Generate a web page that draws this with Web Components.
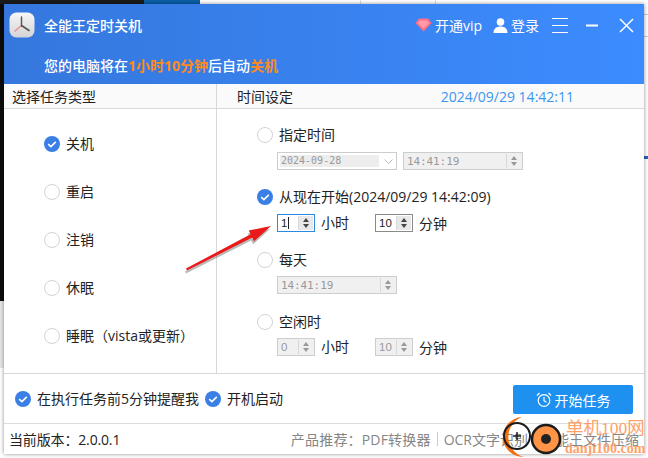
<!DOCTYPE html>
<html lang="zh">
<head>
<meta charset="utf-8">
<title>全能王定时关机</title>
<style>
	html, body {
		margin: 0;
		padding: 0;
		background: #fff;
		font: 14px "Open Sans", "Noto Sans CJK SC", sans-serif;
		color: #222;
	}
</style>
</head>
<body>
<shot-desktop>
	<app-window>
		<title-bar slot="head"></title-bar>
		<task-panel slot="body"></task-panel>
		<option-bar slot="options"></option-bar>
		<status-bar slot="status"></status-bar>
	</app-window>
	<red-arrow></red-arrow>
	<site-mark></site-mark>
</shot-desktop>

<script>
'use strict';

function define (name, html) {
	window.customElements.define(name, class extends HTMLElement {
		constructor () {
			super();
			let shadowRoot = this.attachShadow({mode: 'open'});
			shadowRoot.innerHTML = typeof html === 'function' ? html(this) : html;
		}
	});
}

define('shot-desktop', `
	<style>
		:host {
			display: block;
			position: relative;
			width: 648px;
			height: 458px;
			box-sizing: border-box;
			padding: 4px;
			overflow: hidden;
			background:
				linear-gradient(to right, #1b1b1b 0 144px, #0a5fa8 144px 200px, #fff 200px 360px, #ddd 360px 361px, #fff 361px 435px, #ddd 435px 436px, #fff 436px) top left / 100% 4px no-repeat,
				linear-gradient(#0c0c0c 0 301px, #e6e6e6 301px 368px, #fff 368px) top left / 4px 100% no-repeat,
				linear-gradient(#fff 0 14px, #ccc 14px 15px, #fff 15px 36px, #ccc 36px 37px, #fff 37px 156px, #2a5fc0 156px 159px, #fff 159px) top right / 4px 100% no-repeat,
				#fff;
		}
	</style>
	<slot></slot>
`);

define('app-window', `
	<style>
		:host {
			display: flex;
			flex-direction: column;
			width: 640px;
			height: 450px;
			background: #fff;
			box-shadow: 0 0 4px rgba(0, 0, 0, .45);
		}
	</style>
	<slot name="head"></slot>
	<slot name="body"></slot>
	<slot name="options"></slot>
	<slot name="status"></slot>
`);

define('title-bar', `
	<style>
		:host {
			display: flex;
			flex-direction: column;
			height: 80px;
			flex: none;
			box-sizing: border-box;
			padding: 8px 10px 0 5px;
			color: #fff;
			background: linear-gradient(to right, #3577dd, #3c8cff);
			font-size: 14px;
		}
		.top { display: flex; align-items: center; height: 26px; }
		.logo { width: 26px; height: 26px; flex: none; margin-right: 9px; }
		.name { font-weight: 500; flex: 1; }
		.tool { display: flex; align-items: center; gap: 3px; white-space: nowrap; }
		.vip { margin-right: 11px; }
		.menu { margin-left: 13px; }
		.min { margin-left: 18px; }
		.close { margin-left: 21px; }
		svg { display: block; flex: none; }
		.msg { margin: 18px 0 0 35px; font-weight: 500; line-height: 20px; }
		.msg b { color: #ff8a1c; font-weight: 700; }
	</style>
	<div class="top">
		<svg class="logo" viewBox="0 0 26 26">
			<defs><linearGradient id="lg" x1="0" y1="0" x2="0" y2="1"><stop offset="0" stop-color="#f7f7f7"/><stop offset="1" stop-color="#d4d4d6"/></linearGradient></defs>
			<rect x="0.5" y="0.5" width="25" height="25" rx="7" fill="url(#lg)"/>
			<path d="M12.5 13.5V5" stroke="#555" stroke-width="1.4" stroke-linecap="round"/>
			<path d="M12.5 13.5L6 19" stroke="#e88f8f" stroke-width="1.4" stroke-linecap="round"/>
			<path d="M12.5 13.5L20 18.5" stroke="#555" stroke-width="1.6" stroke-linecap="round"/>
		</svg>
		<span class="name">全能王定时关机</span>
		<span class="tool vip">
			<svg width="17" height="14" viewBox="0 0 17 14"><path d="M4 .5h9L16.5 5 8.5 13.5.5 5z" fill="#ff6f86"/><path d="M5 2.5h7L14 5l-5.500 5.500L3 5z" fill="#ff9aa8"/></svg>
			<span>开通vip</span>
		</span>
		<span class="tool">
			<svg width="15" height="15" viewBox="0 0 15 15" fill="#fff"><circle cx="7.500" cy="4" r="3.800"/><path d="M.5 15c0-4.500 3-6.500 7-6.500s7 2 7 6.500z"/></svg>
			<span>登录</span>
		</span>
		<svg class="menu" width="16" height="15" viewBox="0 0 16 15" stroke="#fff" stroke-width="1"><path d="M0 .5h16M0 7.500h16M0 14.500h16"/></svg>
		<svg class="min" width="12" height="3" viewBox="0 0 12 3"><rect width="12" height="2" y=".5" fill="#fff"/></svg>
		<svg class="close" width="15" height="15" viewBox="0 0 15 15" stroke="#fff" stroke-width="1.500"><path d="M1 1l13 13M14 1L1 14"/></svg>
	</div>
	<div class="msg">您的电脑将在<b>1小时10分钟</b>后自动<b>关机</b></div>
`);

define('check-item', (el) => `
	<style>
		:host {
			display: flex;
			align-items: center;
			gap: 6px;
			white-space: nowrap;
			color: #222;
			font-size: 14px;
			line-height: 18px;
		}
		svg { display: block; flex: none; }
	</style>
	<svg width="16" height="16" viewBox="0 0 16 16">
		${el.hasAttribute('checked')
			? '<circle cx="8" cy="8" r="8" fill="#3a7fe6"/><path d="M4.200 8.200l2.700 2.400 4.900-4.700" fill="none" stroke="#fff" stroke-width="1.600"/>'
			: '<circle cx="8" cy="8" r="7.500" fill="#fff" stroke="#d2d2d2"/>'}
	</svg>
	<span><slot></slot></span>
`);

define('spin-box', (el) => {
	let off = el.hasAttribute('disabled');
	let caret = el.hasAttribute('caret') ? '<i class="caret"></i>' : '';
	return `
	<style>
		:host {
			display: inline-flex;
			align-items: center;
			box-sizing: border-box;
			height: 18px;
			width: ${el.getAttribute('width') || 38}px;
			flex: none;
			padding: 0 1px 0 3px;
			border: 1px solid ${el.hasAttribute('caret') ? '#2a8ae0' : off ? '#cdcdcd' : '#8a8a8a'};
			background: ${off ? '#f0f0f0' : '#fff'};
			color: ${off ? '#999' : '#222'};
			font: 11.500px "Liberation Sans", sans-serif;
		}
		:host([mono]) {
			font: 11px "DejaVu Sans Mono", monospace;
			letter-spacing: -.1px;
		}
		.val { flex: 1; display: flex; align-items: center; white-space: nowrap; }
		.caret { display: block; width: 1px; height: 12px; margin-left: 1px; background: #222; }
		.btn {
			display: flex;
			flex-direction: column;
			align-items: center;
			justify-content: center;
			gap: 2px;
			width: 14px;
			height: 14px;
			flex: none;
			background: ${off ? '#f0f0f0' : '#e8e8e8'};
			border-left: 1px solid #d8d8d8;
		}
		.btn::before, .btn::after {
			content: '';
			border: 3px solid transparent;
			border-top-width: 0;
			border-bottom: 4px solid ${off ? '#999' : '#444'};
		}
		.btn::after { transform: scaleY(-1); }
	</style>
	<span class="val"><slot></slot>${caret}</span>
	<span class="btn"></span>
`;
});

define('date-box', `
	<style>
		:host {
			display: inline-flex;
			align-items: center;
			box-sizing: border-box;
			width: 120px;
			height: 18px;
			flex: none;
			padding: 2px;
			border: 1px solid #cdcdcd;
			background: #fff;
			color: #999;
			font: 10px "DejaVu Sans Mono", monospace;
		}
		.val { width: 99px; height: 12px; line-height: 12px; padding-left: 1px; box-sizing: border-box; background: #ededed; white-space: nowrap; }
		svg { margin-left: 5px; }
	</style>
	<span class="val"><slot></slot></span>
	<svg width="9" height="5" viewBox="0 0 9 5" fill="none" stroke="#bbb"><path d="M.5.5l4 4 4-4"/></svg>
`);

define('task-panel', `
	<style>
		:host {
			display: grid;
			grid-template-columns: 213px 1fr;
			grid-template-rows: 25px 1fr;
			height: 290px;
			flex: none;
			font-size: 14px;
			color: #222;
			border-bottom: 1px solid #d8d8d8;
			box-sizing: border-box;
		}
		.hd {
			display: flex;
			align-items: center;
			justify-content: space-between;
			box-sizing: border-box;
			padding-top: 2px;
			background: #fafafa;
			border-bottom: 1px solid #d8d8d8;
			line-height: 18px;
		}
		.hd.l { padding-left: 8px; border-right: 1px solid #d8d8d8; }
		.hd.r { padding-left: 20px; padding-right: 70px; }
		.now { color: #3a96ee; }
		.types {
			display: grid;
			grid-auto-rows: 48px;
			padding: 11px 0 0 40px;
			border-right: 1px solid #d8d8d8;
			box-sizing: border-box;
			align-items: center;
		}
		.plans {
			display: flex;
			flex-direction: column;
			padding: 17px 0 0 40px;
		}
		.sub {
			display: flex;
			align-items: center;
			height: 18px;
			margin: 8px 0 0 20px;
			gap: 6px;
		}
		.sub.near { margin-top: 7px; }
		.unit { width: 48px; line-height: 18px; }
		.plans .p2 { margin-top: 18px; }
		.plans .p3 { margin-top: 19px; }
		.plans .p4 { margin-top: 19px; }
	</style>
	<div class="hd l">选择任务类型</div>
	<div class="hd r"><span>时间设定</span><span class="now">2024/09/29 14:42:11</span></div>
	<div class="types">
		<check-item checked>关机</check-item>
		<check-item>重启</check-item>
		<check-item>注销</check-item>
		<check-item>休眠</check-item>
		<check-item>睡眠（vista或更新）</check-item>
	</div>
	<div class="plans">
		<check-item>指定时间</check-item>
		<div class="sub"><date-box>2024-09-28</date-box><spin-box width="120" mono disabled>14:41:19</spin-box></div>
		<check-item class="p2" checked>从现在开始(2024/09/29 14:42:09)</check-item>
		<div class="sub"><spin-box caret>1</spin-box><span class="unit">小时</span><spin-box>10</spin-box><span>分钟</span></div>
		<check-item class="p3">每天</check-item>
		<div class="sub near"><spin-box width="120" mono disabled>14:41:19</spin-box></div>
		<check-item class="p4">空闲时</check-item>
		<div class="sub near"><spin-box disabled>0</spin-box><span class="unit">小时</span><spin-box disabled>10</spin-box><span>分钟</span></div>
	</div>
`);

define('option-bar', `
	<style>
		:host {
			display: flex;
			align-items: center;
			gap: 6px;
			height: 49px;
			flex: none;
			padding: 0 11px;
			border-bottom: 1px solid #dcdcdc;
			box-sizing: content-box;
		}
		button {
			display: flex;
			align-items: center;
			justify-content: center;
			gap: 3px;
			width: 120px;
			height: 29px;
			margin: 2px 0 0 auto;
			padding: 0;
			border: 0;
			border-radius: 2px;
			background: #1e90f0;
			color: #fff;
			font: inherit;
			font-size: 14px;
		}
		svg { display: block; }
	</style>
	<check-item checked>在执行任务前5分钟提醒我</check-item>
	<check-item checked>开机启动</check-item>
	<button>
		<svg width="16" height="16" viewBox="0 0 16 16" fill="none" stroke="#fff" stroke-width="1.200">
			<circle cx="8" cy="8.500" r="5.800"/>
			<path d="M8 5v3.700l2.500 1.500M1 3.500L3.500 1M15 3.500L12.500 1"/>
		</svg>
		<span>开始任务</span>
	</button>
`);

define('status-bar', `
	<style>
		:host {
			display: flex;
			align-items: center;
			flex: 1;
			padding: 0 5px;
			font-size: 14px;
			color: #222;
			white-space: nowrap;
		}
		.ver { flex: 1; letter-spacing: -.15px; }
		.links { display: flex; align-items: center; color: #868686; }
		.first { letter-spacing: .18px; }
		.sep { width: 1px; height: 14px; margin: 0 6px; background: #ccc; }
	</style>
	<span class="ver">当前版本：2.0.0.1</span>
	<span class="links">
		<span class="first">产品推荐：PDF转换器</span><i class="sep"></i><span>OCR文字识别</span><i class="sep"></i><span>全能王文件压缩</span>
	</span>
`);

/* annotation drawn on top of the screenshot */
define('red-arrow', `
	<style>
		:host { position: absolute; left: 180px; top: 222px; width: 100px; height: 54px; }
		svg { display: block; overflow: visible; }
	</style>
	<svg width="100" height="54" viewBox="0 0 100 54">
		<path d="M6 46.500L70.600 12.300 68.700 8.500 91 4 74.100 19.300 72.200 15.500 7 48.500z" fill="#666" opacity=".45" transform="translate(-1 3)"/>
		<path d="M6 46.500L70.600 12.300 68.700 8.500 91 4 74.100 19.300 72.200 15.500 7 48.500z" fill="#ea1a1a"/>
	</svg>
`);

define('site-mark', `
	<style>
		:host { position: absolute; left: 498px; top: 414px; width: 150px; height: 44px; }
		svg { display: block; position: absolute; left: 0; top: 0; }
		.cn, .en {
			position: absolute;
			color: #ff9a5c;
			font-family: "Liberation Serif", "Noto Sans CJK SC", serif;
			white-space: nowrap;
			opacity: .92;
		}
		.cn { left: 68px; top: 3px; font-size: 17.500px; line-height: 22px; }
		.en { left: 67px; top: 27px; font-size: 14px; line-height: 16px; font-weight: 700; }
	</style>
	<svg width="70" height="44" viewBox="0 0 70 44">
		<path d="M24 3A20 20 0 0 0 26 43A21 21 0 0 1 24 3z" fill="#f36f10"/>
		<circle cx="19" cy="22" r="13" fill="none" stroke="#1c1c1c" stroke-width="2"/>
		<path d="M15 22h8M19 18v8" stroke="#1c1c1c" stroke-width="1.500"/>
		<circle cx="48" cy="25" r="14" fill="#ff9447" stroke="#1c1c1c" stroke-width="2.500"/>
		<circle cx="48" cy="25" r="5" fill="#222"/>
	</svg>
	<span class="cn">单机100网</span>
	<span class="en">danji100.com</span>
`);
</script>
</body>
</html>
